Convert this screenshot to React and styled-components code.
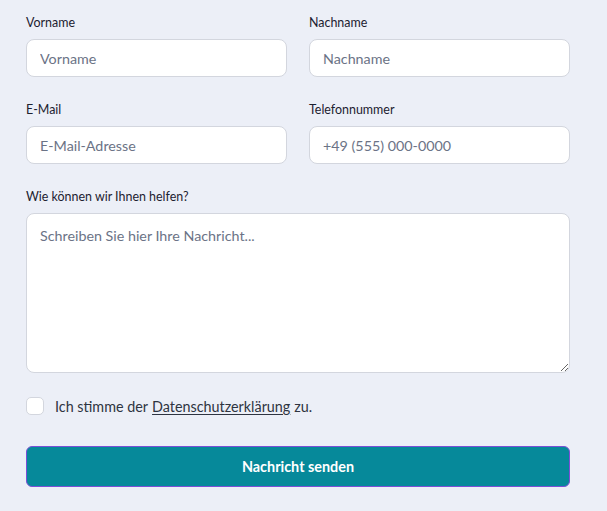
import React, { useState } from "react";
import styled, { createGlobalStyle } from "styled-components";

const GlobalStyle = createGlobalStyle`
  html, body {
    margin: 0;
    padding: 0;
    background: #eceff7;
  }
  body {
    font-family: "Lato", "Liberation Sans", sans-serif;
  }
`;

const Page = styled.div`
  min-height: 100vh;
  background: #eceff7;
  padding: 15px 26px 0;
  box-sizing: border-box;
`;

const Form = styled.form`
  width: 544px;
  display: flex;
  flex-direction: column;
`;

const Grid = styled.div`
  display: grid;
  grid-template-columns: 1fr 1fr;
  column-gap: 22px;
  row-gap: 25px;
`;

const Field = styled.div`
  display: flex;
  flex-direction: column;
  grid-column: ${({ $full }) => ($full ? "1 / -1" : "auto")};
`;

const Label = styled.label`
  font-size: 12.45px;
  line-height: 16px;
  color: #1c2130;
  margin-bottom: 8px;
`;

const Input = styled.input`
  height: 38px;
  box-sizing: border-box;
  border: 1px solid #d3d6de;
  border-radius: 8px;
  background: #fff;
  padding: 0 13px;
  font-family: inherit;
  font-size: 14.3px;
  color: #1f2433;
  outline: none;

  &::placeholder {
    color: #6b7386;
  }
`;

const TextArea = styled.textarea`
  height: 160px;
  box-sizing: border-box;
  border: 1px solid #d3d6de;
  border-radius: 8px;
  background: #fff;
  padding: 12px 13px;
  font-family: inherit;
  font-size: 14.3px;
  line-height: 20px;
  color: #1f2433;
  resize: vertical;
  outline: none;

  &::placeholder {
    color: #6b7386;
  }
`;

const Consent = styled.label`
  display: flex;
  align-items: center;
  gap: 11px;
  margin-top: 24px;
  font-size: 14.35px;
  color: #2e3441;
`;

const Box = styled.input`
  appearance: none;
  margin: 0;
  width: 18px;
  height: 18px;
  border: 1px solid #d3d6de;
  border-radius: 5px;
  background: #fff;
  cursor: pointer;

  &:checked {
    background: #06899a;
    border-color: #06899a;
  }
`;

const Link = styled.a`
  color: #2e3441;
  text-decoration: underline;
  text-underline-offset: 2px;
  margin: 0 4px;
`;

const Submit = styled.button`
  margin-top: 31px;
  height: 41px;
  border: 1px solid #7a4fd6;
  border-radius: 6px;
  background: #06899a;
  color: #fff;
  font-family: inherit;
  font-size: 14.4px;
  font-weight: 700;
  cursor: pointer;
`;

const App = () => {
  const [agreed, setAgreed] = useState(false);

  return (
    <Page>
      <GlobalStyle />
      <Form onSubmit={(e) => e.preventDefault()}>
        <Grid>
          <Field>
            <Label>Vorname</Label>
            <Input type="text" placeholder="Vorname" />
          </Field>
          <Field>
            <Label>Nachname</Label>
            <Input type="text" placeholder="Nachname" />
          </Field>
          <Field>
            <Label>E-Mail</Label>
            <Input type="email" placeholder="E-Mail-Adresse" />
          </Field>
          <Field>
            <Label>Telefonnummer</Label>
            <Input type="tel" placeholder="+49 (555) 000-0000" />
          </Field>
          <Field $full>
            <Label>Wie können wir Ihnen helfen?</Label>
            <TextArea placeholder="Schreiben Sie hier Ihre Nachricht..." />
          </Field>
        </Grid>
        <Consent>
          <Box
            type="checkbox"
            checked={agreed}
            onChange={(e) => setAgreed(e.target.checked)}
          />
          <span>
            Ich stimme der<Link href="#">Datenschutzerklärung</Link>zu.
          </span>
        </Consent>
        <Submit type="submit">Nachricht senden</Submit>
      </Form>
    </Page>
  );
};

export default App;
